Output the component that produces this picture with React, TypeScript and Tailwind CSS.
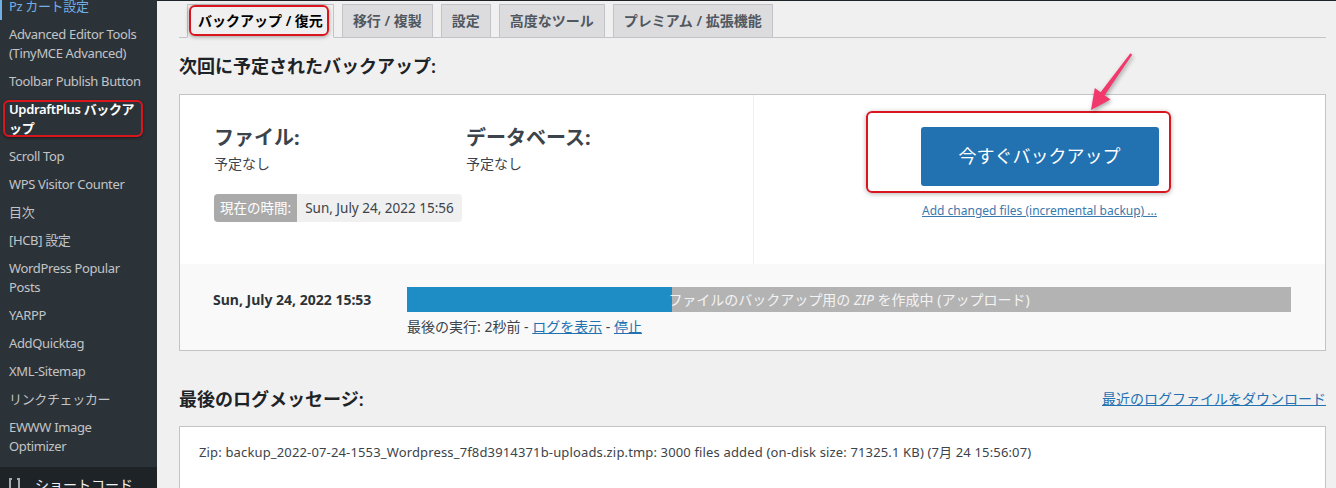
const menu: { label: string[]; active?: boolean; hover?: boolean }[] = [
  { label: ["Pz カート設定"], hover: true },
  { label: ["Advanced Editor Tools", "(TinyMCE Advanced)"] },
  { label: ["Toolbar Publish Button"] },
  { label: ["UpdraftPlus バックア", "ップ"], active: true },
  { label: ["Scroll Top"] },
  { label: ["WPS Visitor Counter"] },
  { label: ["目次"] },
  { label: ["[HCB] 設定"] },
  { label: ["WordPress Popular", "Posts"] },
  { label: ["YARPP"] },
  { label: ["AddQuicktag"] },
  { label: ["XML-Sitemap"] },
  { label: ["リンクチェッカー"] },
  { label: ["EWWW Image", "Optimizer"] },
]

const tabs = ["移行 / 複製", "設定", "高度なツール", "プレミアム / 拡張機能"]

function Sidebar() {
  return (
    <aside className="flex w-[157px] shrink-0 flex-col bg-[#2c3338]">
      <ul className="-mt-[8px] pb-[7px]">
        {menu.map((m, i) => (
          <li
            key={i}
            className={
              "relative py-[4.5px] pl-[9px] pr-[8px] text-[13px] leading-[19px] tracking-[-0.35px] " +
              (m.active
                ? "font-semibold text-white"
                : m.hover
                  ? "text-[#72aee6] shadow-[inset_2px_0_0_#72aee6]"
                  : "text-[#c3c4c7]")
            }
          >
            {m.label.map((l, j) => (
              <div key={j} className="whitespace-nowrap">
                {l}
              </div>
            ))}
            {m.active && (
              <span className="absolute bottom-[5px] left-[3px] right-[14px] top-[5px] rounded-[6px] border-2 border-[#d9161e] shadow-[0_1px_3px_rgba(0,0,0,0.5)]" />
            )}
          </li>
        ))}
      </ul>
      <div className="flex flex-1 items-start gap-[14px] bg-[#1d2327] pl-[8px] pt-[9px] text-[14px] leading-[18px] text-[#f0f0f1]">
        <svg width="13" height="16" viewBox="0 0 13 16" className="mt-[1px]">
          <path d="M1 1h3v2H3v10h1v2H1z M12 1H9v2h1v10H9v2h3z" fill="#a7aaad" />
        </svg>
        <span className="whitespace-nowrap">ショートコード</span>
      </div>
    </aside>
  )
}

function Arrow() {
  return (
    <svg
      className="absolute left-[1080px] top-[45px] drop-shadow-[1px_2px_2px_rgba(0,0,0,0.35)]"
      width="60"
      height="75"
      viewBox="0 0 60 75"
    >
      <polygon
        points="52.2,9.8 24.6,50.2 30.5,54.4 11,65 14.8,43 20.6,47.2 50.4,8.2"
        fill="#f2396c"
      />
    </svg>
  )
}

export default function App() {
  return (
    <div className="relative flex h-[488px] w-[1336px] overflow-hidden bg-[#f0f0f1] font-['Noto_Sans','Noto_Sans_CJK_JP',sans-serif] text-[#3c434a]">
      <Sidebar />

      <main className="flex-1 border-t border-[#1d2327] pl-[22px] pr-[10px] pt-[3px]">
        {/* tabs */}
        <div className="flex border-b border-[#c3c4c7]">
          <div className="relative -mb-px ml-[8px] border border-[#c3c4c7] border-b-[#f0f0f1] bg-[#f0f0f1] px-[10px] py-[5px] text-[14px] font-semibold leading-[22px] text-black">
            バックアップ / 復元
            <span className="absolute bottom-[1px] left-[1px] right-[4px] top-0 rounded-[6px] border-2 border-[#d9161e] shadow-[0_1px_4px_rgba(0,0,0,0.35)]" />
          </div>
          {tabs.map((t) => (
            <div
              key={t}
              className="-mb-px ml-[8px] border border-[#c3c4c7] bg-[#dcdcde] px-[10px] py-[5px] text-[14px] font-semibold leading-[22px] text-[#50575e]"
            >
              {t}
            </div>
          ))}
        </div>

        <h3 className="mt-[16px] text-[18px] font-semibold leading-[24px] text-[#1d2327]">
          次回に予定されたバックアップ:
        </h3>

        {/* schedule card */}
        <div className="mt-[16px] border border-[#c3c4c7] bg-white">
          <div className="flex h-[169px]">
            <div className="w-[574px] border-r border-[#f0f0f1] pl-[34px] pt-[30px]">
              <div className="flex">
                <div className="w-[252px]">
                  <div className="text-[20px] font-bold leading-[26px] text-[#3c434a]">ファイル:</div>
                  <div className="mt-[3px] text-[14px] leading-[20px]">予定なし</div>
                </div>
                <div>
                  <div className="text-[20px] font-bold leading-[26px] text-[#3c434a]">データベース:</div>
                  <div className="mt-[3px] text-[14px] leading-[20px]">予定なし</div>
                </div>
              </div>
              <div className="mt-[20px] flex h-[28px] w-fit overflow-hidden rounded-[4px] text-[13.5px] leading-[28px]">
                <span className="bg-[#aaaaaa] px-[6px] text-white">現在の時間:</span>
                <span className="bg-[#f0f0f0] px-[8px] text-[#3c434a]">Sun, July 24, 2022 15:56</span>
              </div>
            </div>
            <div className="flex flex-1 flex-col items-center pt-[32px]">
              <div className="relative">
                <button className="h-[59px] w-[238px] rounded-[3px] bg-[#2271b1] text-[18px] text-white">
                  今すぐバックアップ
                </button>
                <span className="absolute -bottom-[7px] -left-[55px] -right-[12px] -top-[16px] rounded-[6px] border-2 border-[#d9161e] shadow-[0_1px_5px_rgba(0,0,0,0.3)]" />
              </div>
              <a className="mt-[16px] text-[12px] leading-[18px] text-[#3a79ad] underline">
                Add changed files (incremental backup) ...
              </a>
            </div>
          </div>

          <div className="flex bg-[#f9f9f9] pb-[14px] pl-[33px] pr-[34px] pt-[23px]">
            <div className="w-[194px] text-[14px] font-bold leading-[25px] text-[#2c3338]">
              Sun, July 24, 2022 15:53
            </div>
            <div className="flex-1">
              <div className="relative flex h-[25px] bg-[#b3b3b3]">
                <div className="w-[265px] bg-[#1f8dc5]" />
                <div className="absolute inset-0 flex items-center justify-center whitespace-nowrap text-[14px] text-[#f3f3f3]">
                  ファイルのバックアップ用の&nbsp;<i>ZIP</i>&nbsp;を作成中 (アップロード)
                </div>
              </div>
              <div className="mt-[6px] text-[14px] leading-[18px]">
                最後の実行: 2秒前 - <a className="text-[#2271b1] underline">ログを表示</a> -{" "}
                <a className="text-[#2271b1] underline">停止</a>
              </div>
            </div>
          </div>
        </div>

        <div className="mt-[36px] flex items-center justify-between">
          <h3 className="text-[18px] font-semibold leading-[24px] text-[#1d2327]">最後のログメッセージ:</h3>
          <a className="text-[14px] leading-[20px] text-[#2271b1] underline">最近のログファイルをダウンロード</a>
        </div>

        <div className="mt-[15px] h-[80px] border border-[#c3c4c7] bg-white px-[19px] pt-[16px] text-[13px] leading-[18px] tracking-[0.15px] text-[#3c434a]">
          Zip: backup_2022-07-24-1553_Wordpress_7f8d3914371b-uploads.zip.tmp: 3000 files added (on-disk size:
          71325.1 KB) (7月 24 15:56:07)
        </div>
      </main>

      <Arrow />
    </div>
  )
}
